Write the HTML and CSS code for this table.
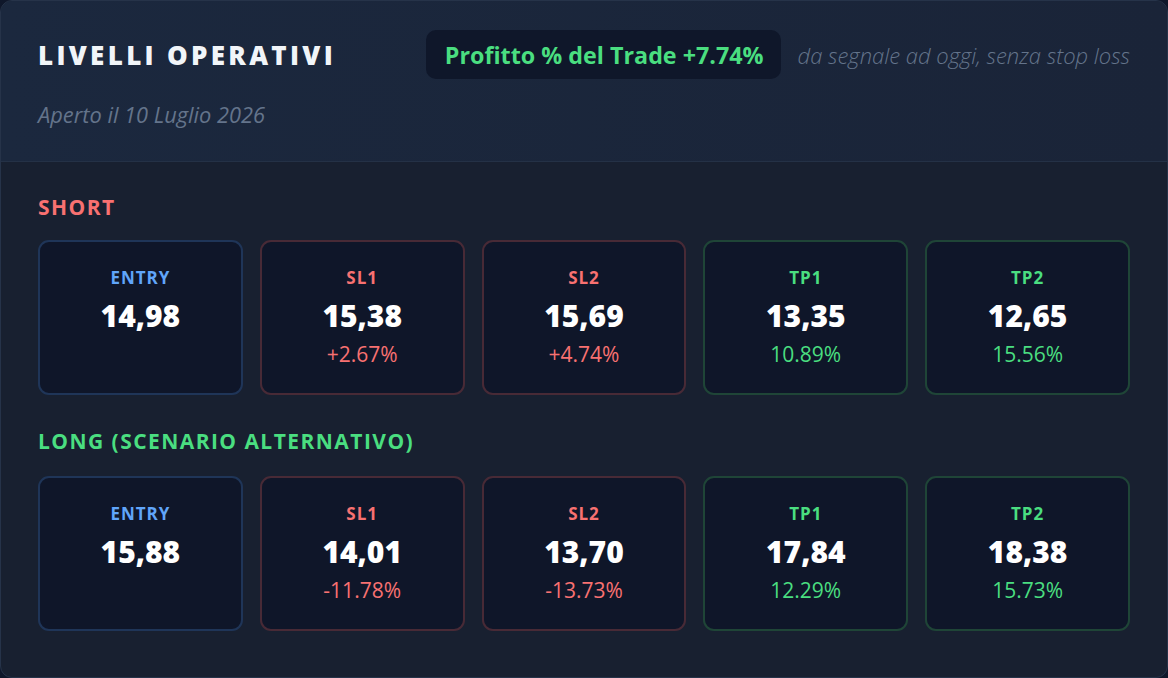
FILE: index.html
```html
<!DOCTYPE html>
<html lang="it">
<head>
<meta charset="utf-8">
<title>Livelli Operativi</title>
<link rel="stylesheet" href="styles.css">
</head>
<body>
<div class="panel">
  <header class="head">
    <div class="head-row">
      <h1 class="title">LIVELLI OPERATIVI</h1>
      <div class="profit">
        <span class="badge">Profitto % del Trade +7.74%</span>
        <span class="note">da segnale ad oggi, senza stop loss</span>
      </div>
    </div>
    <div class="date">Aperto il 10 Luglio 2026</div>
  </header>
  <section class="body">
    <h2 class="sec sec-short">SHORT</h2>
    <div class="grid">
      <div class="card c-entry"><div class="lbl">ENTRY</div><div class="val">14,98</div></div>
      <div class="card c-sl"><div class="lbl">SL1</div><div class="val">15,38</div><div class="pct">+2.67%</div></div>
      <div class="card c-sl"><div class="lbl">SL2</div><div class="val">15,69</div><div class="pct">+4.74%</div></div>
      <div class="card c-tp"><div class="lbl">TP1</div><div class="val">13,35</div><div class="pct">10.89%</div></div>
      <div class="card c-tp"><div class="lbl">TP2</div><div class="val">12,65</div><div class="pct">15.56%</div></div>
    </div>
    <h2 class="sec sec-long">LONG (SCENARIO ALTERNATIVO)</h2>
    <div class="grid">
      <div class="card c-entry"><div class="lbl">ENTRY</div><div class="val">15,88</div></div>
      <div class="card c-sl"><div class="lbl">SL1</div><div class="val">14,01</div><div class="pct">-11.78%</div></div>
      <div class="card c-sl"><div class="lbl">SL2</div><div class="val">13,70</div><div class="pct">-13.73%</div></div>
      <div class="card c-tp"><div class="lbl">TP1</div><div class="val">17,84</div><div class="pct">12.29%</div></div>
      <div class="card c-tp"><div class="lbl">TP2</div><div class="val">18,38</div><div class="pct">15.73%</div></div>
    </div>
  </section>
</div>
</body>
</html>
```
FILE: styles.css
```css
* { box-sizing: border-box; }
html, body { margin: 0; padding: 0; }
body {
  background: #0f172a;
  font-family: "Open Sans", "Noto Sans", sans-serif;
  width: 1168px;
  height: 678px;
  overflow: hidden;
}
.panel {
  width: 1168px;
  height: 678px;
  border: 1px solid #263349;
  border-radius: 12px;
  background: #182030;
  overflow: hidden;
}
.head {
  background: linear-gradient(90deg, #1b283e 0%, #1a2438 100%);
  border-bottom: 1px solid #243146;
  padding: 29px 37px 0 37px;
  height: 161px;
}
.head-row {
  display: flex;
  align-items: center;
  justify-content: space-between;
  height: 49px;
}
.title {
  margin: 0;
  font-size: 26px;
  font-weight: 800;
  letter-spacing: 3.3px;
  color: #f1f5f9;
  line-height: 1;
}
.profit {
  display: flex;
  align-items: center;
  gap: 17px;
}
.badge {
  background: #0f172a;
  border-radius: 10px;
  height: 49px;
  padding: 0 17px 0 19px;
  display: flex;
  align-items: center;
  color: #4ade80;
  font-size: 23.3px;
  font-weight: 700;
}
.note {
  color: #64748b;
  font-style: italic;
  font-size: 22px;
  font-weight: 300;
}
.date {
  margin-top: 22px;
  color: #64748b;
  font-style: italic;
  font-size: 21.8px;
  line-height: 28px;
}
.body {
  padding: 31px 37px 0 37px;
}
.sec {
  margin: 0 0 19px 0;
  font-size: 21px;
  line-height: 28px;
  font-weight: 700;
  letter-spacing: 1.45px;
}
.sec-short { color: #f87171; }
.sec-long { color: #4ade80; margin-top: 32px; margin-bottom: 21px; }
.grid {
  display: grid;
  grid-template-columns: repeat(5, 1fr);
  gap: 17px;
}
.card {
  height: 155px;
  border-radius: 11px;
  border: 2px solid #1e3558;
  background: #0f1629;
  display: flex;
  flex-direction: column;
  align-items: center;
  padding-top: 24px;
}
.c-entry { border-color: #1f3558; }
.c-sl { border-color: #482a36; }
.c-tp { border-color: #1f4537; }
.lbl {
  font-size: 17px;
  font-weight: 700;
  letter-spacing: 1px;
  line-height: 24px;
}
.c-entry .lbl { color: #60a5fa; }
.c-sl .lbl { color: #f87171; }
.c-tp .lbl { color: #4ade80; }
.val {
  margin-top: 8px;
  font-size: 30px;
  font-weight: 800;
  color: #ffffff;
  line-height: 36px;
}
.pct {
  margin-top: 6px;
  font-size: 21px;
  line-height: 28px;
}
.c-sl .pct { color: #f87171; }
.c-tp .pct { color: #4ade80; }
```
